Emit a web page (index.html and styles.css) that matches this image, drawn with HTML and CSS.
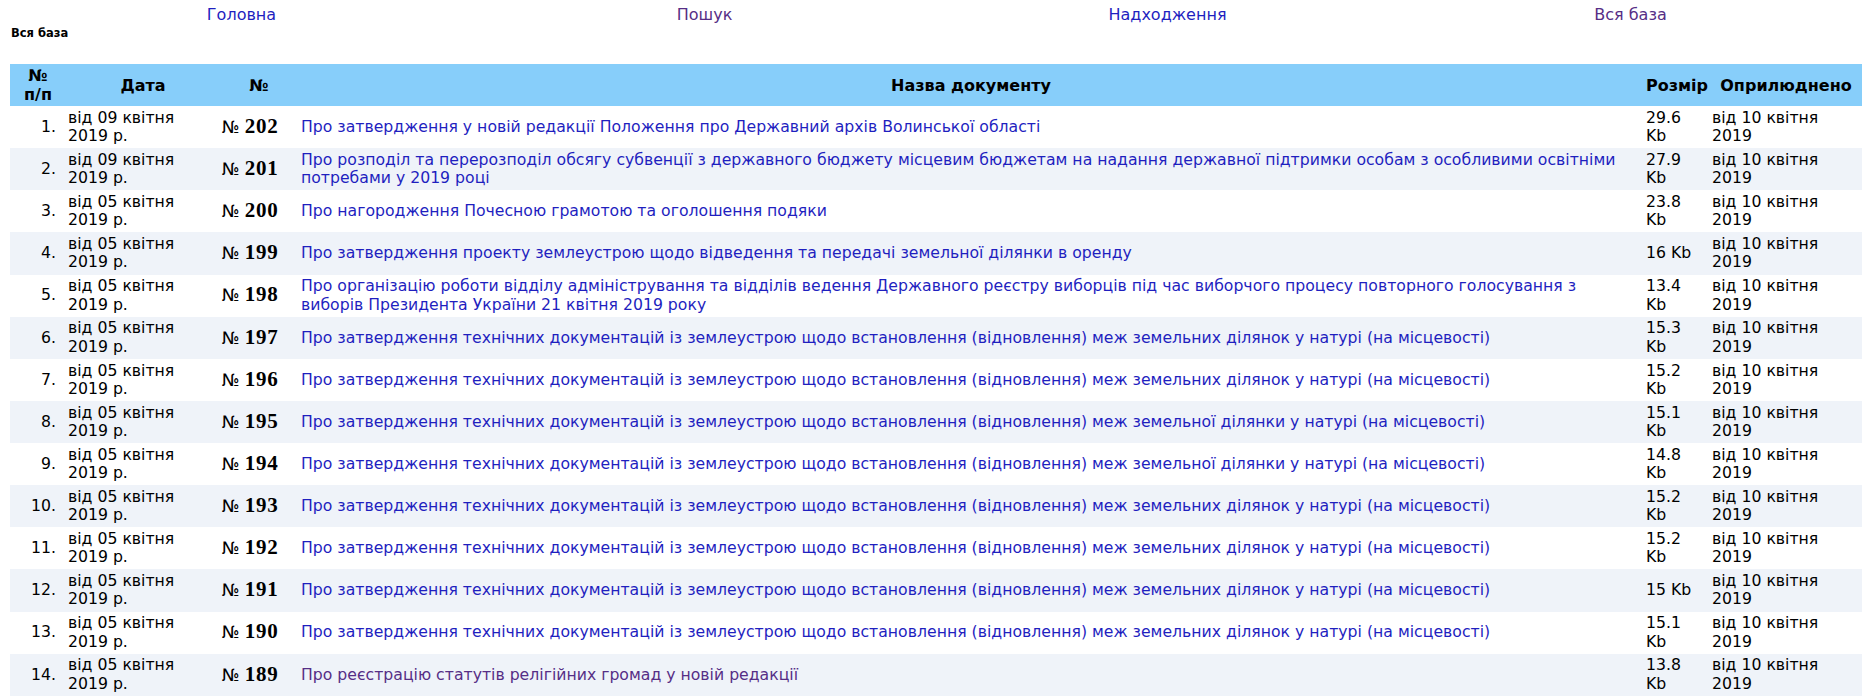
FILE: index.html
```html
<!DOCTYPE html>
<html lang="uk">
<head>
<meta charset="utf-8">
<title>Вся база</title>
<link rel="stylesheet" href="styles.css">
</head>
<body>
<div class="page">
  <nav class="topnav">
    <a class="navlink" href="#">Головна</a>
    <a class="navlink visited" href="#">Пошук</a>
    <a class="navlink" href="#">Надходження</a>
    <a class="navlink visited" href="#">Вся база</a>
  </nav>
  <div class="crumb">Вся база</div>
  <table class="docs">
    <colgroup>
      <col class="c-idx"><col class="c-date"><col class="c-num"><col class="c-title"><col class="c-size"><col class="c-pub">
    </colgroup>
    <thead>
      <tr>
        <th class="h-idx">№<br>п/п</th>
        <th>Дата</th>
        <th>№</th>
        <th>Назва документу</th>
        <th class="h-size">Розмір</th>
        <th>Оприлюднено</th>
      </tr>
    </thead>
    <tbody>
      <tr><td class="idx">1.</td><td class="date">від 09 квітня<br>2019 р.</td><td class="num"><span class="no">№</span> <b>202</b></td><td class="title"><a href="#">Про затвердження у новій редакції Положення про Державний архів Волинської області</a></td><td class="size">29.6<br>Kb</td><td class="pub">від 10 квітня<br>2019</td></tr>
      <tr><td class="idx">2.</td><td class="date">від 09 квітня<br>2019 р.</td><td class="num"><span class="no">№</span> <b>201</b></td><td class="title"><a href="#">Про розподіл та перерозподіл обсягу субвенції з державного бюджету місцевим бюджетам на надання державної підтримки особам з особливими освітніми потребами у 2019 році</a></td><td class="size">27.9<br>Kb</td><td class="pub">від 10 квітня<br>2019</td></tr>
      <tr><td class="idx">3.</td><td class="date">від 05 квітня<br>2019 р.</td><td class="num"><span class="no">№</span> <b>200</b></td><td class="title"><a href="#">Про нагородження Почесною грамотою та оголошення подяки</a></td><td class="size">23.8<br>Kb</td><td class="pub">від 10 квітня<br>2019</td></tr>
      <tr><td class="idx">4.</td><td class="date">від 05 квітня<br>2019 р.</td><td class="num"><span class="no">№</span> <b>199</b></td><td class="title"><a href="#">Про затвердження проекту землеустрою щодо відведення та передачі земельної ділянки в оренду</a></td><td class="size">16 Kb</td><td class="pub">від 10 квітня<br>2019</td></tr>
      <tr><td class="idx">5.</td><td class="date">від 05 квітня<br>2019 р.</td><td class="num"><span class="no">№</span> <b>198</b></td><td class="title"><a href="#">Про організацію роботи відділу адміністрування та відділів ведення Державного реєстру виборців під час виборчого процесу повторного голосування з виборів Президента України 21 квітня 2019 року</a></td><td class="size">13.4<br>Kb</td><td class="pub">від 10 квітня<br>2019</td></tr>
      <tr><td class="idx">6.</td><td class="date">від 05 квітня<br>2019 р.</td><td class="num"><span class="no">№</span> <b>197</b></td><td class="title"><a href="#">Про затвердження технічних документацій із землеустрою щодо встановлення (відновлення) меж земельних ділянок у натурі (на місцевості)</a></td><td class="size">15.3<br>Kb</td><td class="pub">від 10 квітня<br>2019</td></tr>
      <tr><td class="idx">7.</td><td class="date">від 05 квітня<br>2019 р.</td><td class="num"><span class="no">№</span> <b>196</b></td><td class="title"><a href="#">Про затвердження технічних документацій із землеустрою щодо встановлення (відновлення) меж земельних ділянок у натурі (на місцевості)</a></td><td class="size">15.2<br>Kb</td><td class="pub">від 10 квітня<br>2019</td></tr>
      <tr><td class="idx">8.</td><td class="date">від 05 квітня<br>2019 р.</td><td class="num"><span class="no">№</span> <b>195</b></td><td class="title"><a href="#">Про затвердження технічних документацій із землеустрою щодо встановлення (відновлення) меж земельної ділянки у натурі (на місцевості)</a></td><td class="size">15.1<br>Kb</td><td class="pub">від 10 квітня<br>2019</td></tr>
      <tr><td class="idx">9.</td><td class="date">від 05 квітня<br>2019 р.</td><td class="num"><span class="no">№</span> <b>194</b></td><td class="title"><a href="#">Про затвердження технічних документацій із землеустрою щодо встановлення (відновлення) меж земельної ділянки у натурі (на місцевості)</a></td><td class="size">14.8<br>Kb</td><td class="pub">від 10 квітня<br>2019</td></tr>
      <tr><td class="idx">10.</td><td class="date">від 05 квітня<br>2019 р.</td><td class="num"><span class="no">№</span> <b>193</b></td><td class="title"><a href="#">Про затвердження технічних документацій із землеустрою щодо встановлення (відновлення) меж земельних ділянок у натурі (на місцевості)</a></td><td class="size">15.2<br>Kb</td><td class="pub">від 10 квітня<br>2019</td></tr>
      <tr><td class="idx">11.</td><td class="date">від 05 квітня<br>2019 р.</td><td class="num"><span class="no">№</span> <b>192</b></td><td class="title"><a href="#">Про затвердження технічних документацій із землеустрою щодо встановлення (відновлення) меж земельних ділянок у натурі (на місцевості)</a></td><td class="size">15.2<br>Kb</td><td class="pub">від 10 квітня<br>2019</td></tr>
      <tr><td class="idx">12.</td><td class="date">від 05 квітня<br>2019 р.</td><td class="num"><span class="no">№</span> <b>191</b></td><td class="title"><a href="#">Про затвердження технічних документацій із землеустрою щодо встановлення (відновлення) меж земельних ділянок у натурі (на місцевості)</a></td><td class="size">15 Kb</td><td class="pub">від 10 квітня<br>2019</td></tr>
      <tr><td class="idx">13.</td><td class="date">від 05 квітня<br>2019 р.</td><td class="num"><span class="no">№</span> <b>190</b></td><td class="title"><a href="#">Про затвердження технічних документацій із землеустрою щодо встановлення (відновлення) меж земельних ділянок у натурі (на місцевості)</a></td><td class="size">15.1<br>Kb</td><td class="pub">від 10 квітня<br>2019</td></tr>
      <tr><td class="idx">14.</td><td class="date">від 05 квітня<br>2019 р.</td><td class="num"><span class="no">№</span> <b>189</b></td><td class="title"><a class="visited" href="#">Про реєстрацію статутів релігійних громад у новій редакції</a></td><td class="size">13.8<br>Kb</td><td class="pub">від 10 квітня<br>2019</td></tr>
    </tbody>
  </table>
</div>
</body>
</html>
```

FILE: styles.css
```css
html, body {
  margin: 0;
  padding: 0;
  background: #ffffff;
}

body {
  font-family: "DejaVu Sans", Verdana, sans-serif;
  color: #000000;
}

.page {
  width: 1852px;
  padding: 5px 0 0 10px;
}

.topnav {
  display: grid;
  grid-template-columns: repeat(4, 1fr);
  font-size: 16px;
  line-height: 19px;
}

.navlink {
  text-align: center;
  color: #1f1fbf;
  text-decoration: none;
}

.navlink.visited {
  color: #562e86;
}

.crumb {
  margin-top: 3px;
  padding-left: 1px;
  font-size: 11.5px;
  font-weight: bold;
  line-height: 13px;
}

.docs {
  margin-top: 24px;
  width: 1852px;
  table-layout: fixed;
  border-collapse: collapse;
  border-spacing: 0;
  font-size: 15.7px;
  line-height: 18.3px;
}

.c-idx { width: 56px; }
.c-date { width: 154px; }
.c-num { width: 78px; }
.c-title { width: 1346px; }
.c-size { width: 66px; }
.c-pub { width: 152px; }

.docs thead tr {
  background: #87cefa;
}

.docs th {
  font-size: 16px;
  line-height: 19px;
  font-weight: bold;
  padding: 2px 0;
  text-align: center;
  vertical-align: middle;
  white-space: nowrap;
}

.docs th.h-size {
  text-align: left;
  padding-left: 2px;
}

.docs td {
  padding: 2px 2px;
  vertical-align: middle;
  height: 38.14px;
}

.docs tbody tr:nth-child(even) {
  background: #eff3f9;
}

.docs td.idx {
  text-align: right;
  padding-right: 10px;
}

.docs td.num {
  white-space: nowrap;
}

.docs td.num .no {
  font-size: 17px;
}

.docs td.num b {
  font-family: "Liberation Serif", "Times New Roman", serif;
  font-size: 21px;
  font-weight: bold;
  letter-spacing: 0.8px;
}

.docs td.title {
  padding-left: 3px;
}

.docs td.title a {
  color: #1f1fbf;
  text-decoration: none;
}

.docs td.title a.visited {
  color: #562e86;
}
```
